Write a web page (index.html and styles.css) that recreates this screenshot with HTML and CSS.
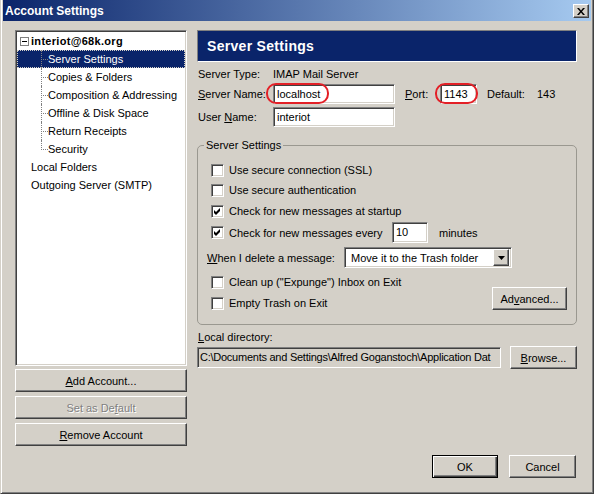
FILE: index.html
```html
<!DOCTYPE html>
<html lang="en">
<head>
  <meta charset="UTF-8" />
  <title>Account Settings</title>
  <link rel="stylesheet" href="styles.css">
</head>
<body>

<div class="window">
  <div class="titlebar">
    <span class="title">Account Settings</span>
    <span class="close">
      <svg width="8" height="7" viewBox="0 0 8 7"><path d="M0 0h2l2 2.5L6 0h2L5 3.5 8 7H6L4 4.5 2 7H0l3-3.5z" fill="#000"/></svg>
    </span>
  </div>

  <div class="body">
    <div class="left">
      <div class="tree sunken">
        <div class="node root"><span class="expander"></span>interiot@68k.org</div>
        <ul class="children">
          <li class="selected">Server Settings</li>
          <li>Copies &amp; Folders</li>
          <li>Composition &amp; Addressing</li>
          <li>Offline &amp; Disk Space</li>
          <li>Return Receipts</li>
          <li>Security</li>
        </ul>
        <div class="node top">Local Folders</div>
        <div class="node top">Outgoing Server (SMTP)</div>
      </div>
      <button class="btn side"><u>A</u>dd Account...</button>
      <button class="btn side disabled">Set as De<u>f</u>ault</button>
      <button class="btn side"><u>R</u>emove Account</button>
    </div>

    <div class="right">
      <div class="header">Server Settings</div>

      <div class="info-row first">
        <span class="lbl">Server Type:</span>
        <span>IMAP Mail Server</span>
      </div>
      <div class="info-row name-row">
        <span class="lbl"><u>S</u>erver Name:</span>
        <span class="field sunken host">localhost</span>
        <span class="port-lbl"><u>P</u>ort:</span>
        <span class="field sunken port">1143</span>
        <span class="def-lbl">Default:</span>
        <span>143</span>
        <span class="mark mark-host"></span>
        <span class="mark mark-port"></span>
      </div>
      <div class="info-row user-row">
        <span class="lbl">User <u>N</u>ame:</span>
        <span class="field sunken host">interiot</span>
      </div>

      <fieldset class="group">
        <legend>Server Settings</legend>
        <div class="check-row r1"><span class="checkbox sunken"></span>Use secure connection (SSL)</div>
        <div class="check-row r2"><span class="checkbox sunken"></span>Use secure authentication</div>
        <div class="check-row r3"><span class="checkbox sunken checked"><svg width="9" height="9" viewBox="0 0 9 9"><path d="M1 3l2 2 4-4v3L3 8 1 6z" fill="#000"/></svg></span>Check for new messages at startup</div>
        <div class="check-row r4">
          <span class="checkbox sunken checked"><svg width="9" height="9" viewBox="0 0 9 9"><path d="M1 3l2 2 4-4v3L3 8 1 6z" fill="#000"/></svg></span>
          <span class="every">Check for new messages every</span>
          <span class="field sunken minutes">10</span>
          <span class="after">minutes</span>
        </div>
        <div class="check-row r5">
          <span class="delete-lbl"><u>W</u>hen I delete a message:</span>
          <span class="select sunken">
            <span class="select-text">Move it to the Trash folder</span>
            <span class="select-btn"><svg width="7" height="4" viewBox="0 0 7 4"><path d="M0 0h7L3.5 4z" fill="#000"/></svg></span>
          </span>
        </div>
        <div class="bottom-rows">
          <div class="bottom-checks">
            <div class="check-row r6"><span class="checkbox sunken"></span>Clean up ("Expunge") Inbox on Exit</div>
            <div class="check-row r7"><span class="checkbox sunken"></span>Empty Trash on Exit</div>
          </div>
          <button class="btn advanced">Ad<u>v</u>anced...</button>
        </div>
      </fieldset>

      <div class="dir-lbl"><u>L</u>ocal directory:</div>
      <div class="dir-row">
        <span class="field sunken path">C:\Documents and Settings\Alfred Goganstoch\Application Dat</span>
        <button class="btn browse"><u>B</u>rowse...</button>
      </div>

      <div class="footer">
        <button class="btn dialog default">OK</button>
        <button class="btn dialog">Cancel</button>
      </div>
    </div>
  </div>
</div>

</body>
</html>
```

FILE: styles.css
```css
* { box-sizing: border-box; }

body {
  margin: 0;
  font-family: "Liberation Sans", Arial, sans-serif;
  font-size: 11px;
  color: #000;
  background: #d4d0c8;
}

u { text-decoration: underline; text-underline-offset: 1px; }

.window {
  width: 594px;
  height: 494px;
  background: #d4d0c8;
  border: 1px solid;
  border-top: 0;
  border-color: #d4d0c8 #404040 #404040 #d4d0c8;
  box-shadow: inset 1px 0 #fff, inset -1px -1px #808080;
  padding: 0 2px 2px 2px;
  display: flex;
  flex-direction: column;
}

/* title bar */
.titlebar {
  height: 21px;
  background: linear-gradient(to right, #0a246a, #a6caf0);
  display: flex;
  align-items: flex-start;
  justify-content: space-between;
  flex-shrink: 0;
}

.title {
  color: #fff;
  font-weight: bold;
  font-size: 12px;
  margin: 4px 0 0 2px;
}

.close {
  width: 16px;
  height: 14px;
  margin: 4px 2px 0 0;
  background: #d4d0c8;
  border: 1px solid;
  border-color: #fff #404040 #404040 #fff;
  box-shadow: inset -1px -1px #808080;
  display: flex;
  align-items: center;
  justify-content: center;
}

/* 3d borders */
.sunken {
  border: 1px solid;
  border-color: #808080 #fff #fff #808080;
  box-shadow: inset 1px 1px #404040, inset -1px -1px #d4d0c8;
}

.btn {
  font: inherit;
  color: #000;
  background: #d4d0c8;
  border: 1px solid;
  border-color: #fff #404040 #404040 #fff;
  box-shadow: inset -1px -1px #808080;
  padding: 0;
  height: 23px;
  cursor: default;
}

.btn.disabled {
  color: #808080;
  text-shadow: 1px 1px #fff;
}

.btn.default {
  border-color: #000;
  box-shadow: inset 1px 1px #fff, inset -1px -1px #404040, inset -2px -2px #808080;
}

.body {
  flex: 1;
  display: flex;
  gap: 10px;
  padding: 9px 14px 13px 12px;
}

/* left column */
.left {
  width: 172px;
  display: flex;
  flex-direction: column;
}

.tree {
  height: 336px;
  background: #fff;
  border-width: 1px;
  padding: 1px;
  margin-bottom: 3px;
}

.node {
  height: 18px;
  line-height: 18px;
  white-space: nowrap;
}

.root {
  font-weight: bold;
  padding-left: 3px;
  display: flex;
  align-items: center;
  letter-spacing: 0.3px;
}

.expander {
  width: 9px;
  height: 9px;
  border: 1px solid #808080;
  margin-right: 2px;
  position: relative;
  background: #fff;
}

.expander::after {
  content: '';
  position: absolute;
  left: 1px;
  top: 3px;
  width: 5px;
  height: 1px;
  background: #000;
}

.top { padding-left: 14px; }

.children {
  list-style: none;
  margin: 0;
  padding: 0;
}

.children li {
  position: relative;
  height: 18px;
  line-height: 18px;
  padding-left: 31px;
  white-space: nowrap;
}

.children li::before {
  content: '';
  position: absolute;
  left: 24px;
  top: 0;
  width: 6px;
  height: 9px;
  border-left: 1px dotted #808080;
  border-bottom: 1px dotted #808080;
}

.children li:not(:last-child)::after {
  content: '';
  position: absolute;
  left: 24px;
  top: 9px;
  bottom: 0;
  border-left: 1px dotted #808080;
}

.children li.selected {
  background: #0a246a;
  color: #fff;
  outline: 1px dotted #d4d0c8;
  outline-offset: -1px;
}

.side { width: 172px; margin-top: 4px; }
.side:first-of-type { margin-top: 0; }

/* right column */
.right {
  width: 380px;
  display: flex;
  flex-direction: column;
}

.header {
  height: 32px;
  background: #0a246a;
  color: #fff;
  font-weight: bold;
  font-size: 14px;
  letter-spacing: 0.3px;
  padding-left: 9px;
  display: flex;
  align-items: center;
  border: 1px solid;
  border-color: #808080 #fff #fff #808080;
}

.info-row {
  display: flex;
  align-items: center;
  padding-left: 1px;
  position: relative;
}

.info-row.first { margin-top: 4px; height: 16px; }
.info-row.name-row { margin-top: 2px; height: 20px; }
.info-row.user-row { margin-top: 3px; height: 20px; }

.lbl { width: 75px; }

.field {
  background: #fff;
  height: 20px;
  line-height: 18px;
  padding-left: 3px;
  white-space: nowrap;
  overflow: hidden;
}

.host { width: 122px; }
.port { width: 37px; }
.port-lbl { width: 35px; margin-left: 10px; }
.def-lbl { width: 50px; margin-left: 10px; }

/* red annotation rings */
.mark {
  position: absolute;
  top: -1px;
  height: 21px;
  border: 2px solid #e32027;
  border-radius: 10px;
}

.mark-host { left: 69px; width: 63px; }
.mark-port { left: 238px; width: 43px; }

/* group box */
.group {
  margin: 12px 0 0 0;
  padding: 10px 9px 12px 13px;
  border: 1px solid #9a9890;
  border-radius: 5px;
  min-inline-size: 0;
}

.group legend {
  line-height: 12px;
  padding: 0 2px;
  margin-left: -7px;
}

.check-row {
  display: flex;
  align-items: center;
  height: 18px;
  white-space: nowrap;
}

.r2 { margin-top: 2px; }
.r3 { margin-top: 3px; }
.r4 { margin-top: 2px; height: 21px; }
.r5 { margin-top: 4px; height: 21px; }
.r6 { margin-top: 0; }
.r7 { margin-top: 3px; }

.checkbox {
  width: 13px;
  height: 13px;
  background: #fff;
  margin-right: 5px;
  display: flex;
  align-items: center;
  justify-content: center;
  flex-shrink: 0;
}

.every { width: 163px; }
.minutes { width: 36px; height: 21px; line-height: 19px; }
.after { margin-left: 11px; }

.delete-lbl { width: 137px; margin-left: -4px; }

.select {
  width: 168px;
  height: 21px;
  background: #fff;
  display: flex;
  align-items: center;
  padding: 2px;
}

.select-text { flex: 1; padding-left: 4px; }

.select-btn {
  width: 16px;
  height: 17px;
  background: #d4d0c8;
  border: 1px solid;
  border-color: #fff #404040 #404040 #fff;
  box-shadow: inset -1px -1px #808080;
  display: flex;
  align-items: center;
  justify-content: center;
}

.bottom-rows {
  display: flex;
  justify-content: space-between;
  margin-top: 5px;
}

.advanced {
  width: 75px;
  align-self: flex-end;
  margin-bottom: 2px;
}

.dir-lbl {
  margin-top: 5px;
  height: 14px;
  line-height: 14px;
  padding-left: 1px;
}

.dir-row {
  margin-top: 2px;
  display: flex;
  align-items: center;
  justify-content: space-between;
  height: 23px;
}

.path {
  width: 304px;
  height: 21px;
  line-height: 19px;
  background: #d4d0c8;
  padding-left: 2px;
  letter-spacing: -0.25px;
}

.browse { width: 67px; }

.footer {
  margin-top: auto;
  display: flex;
  justify-content: flex-end;
  gap: 11px;
  padding-right: 1px;
}

.dialog { width: 66px; }
.dialog + .dialog { width: 67px; }
```
